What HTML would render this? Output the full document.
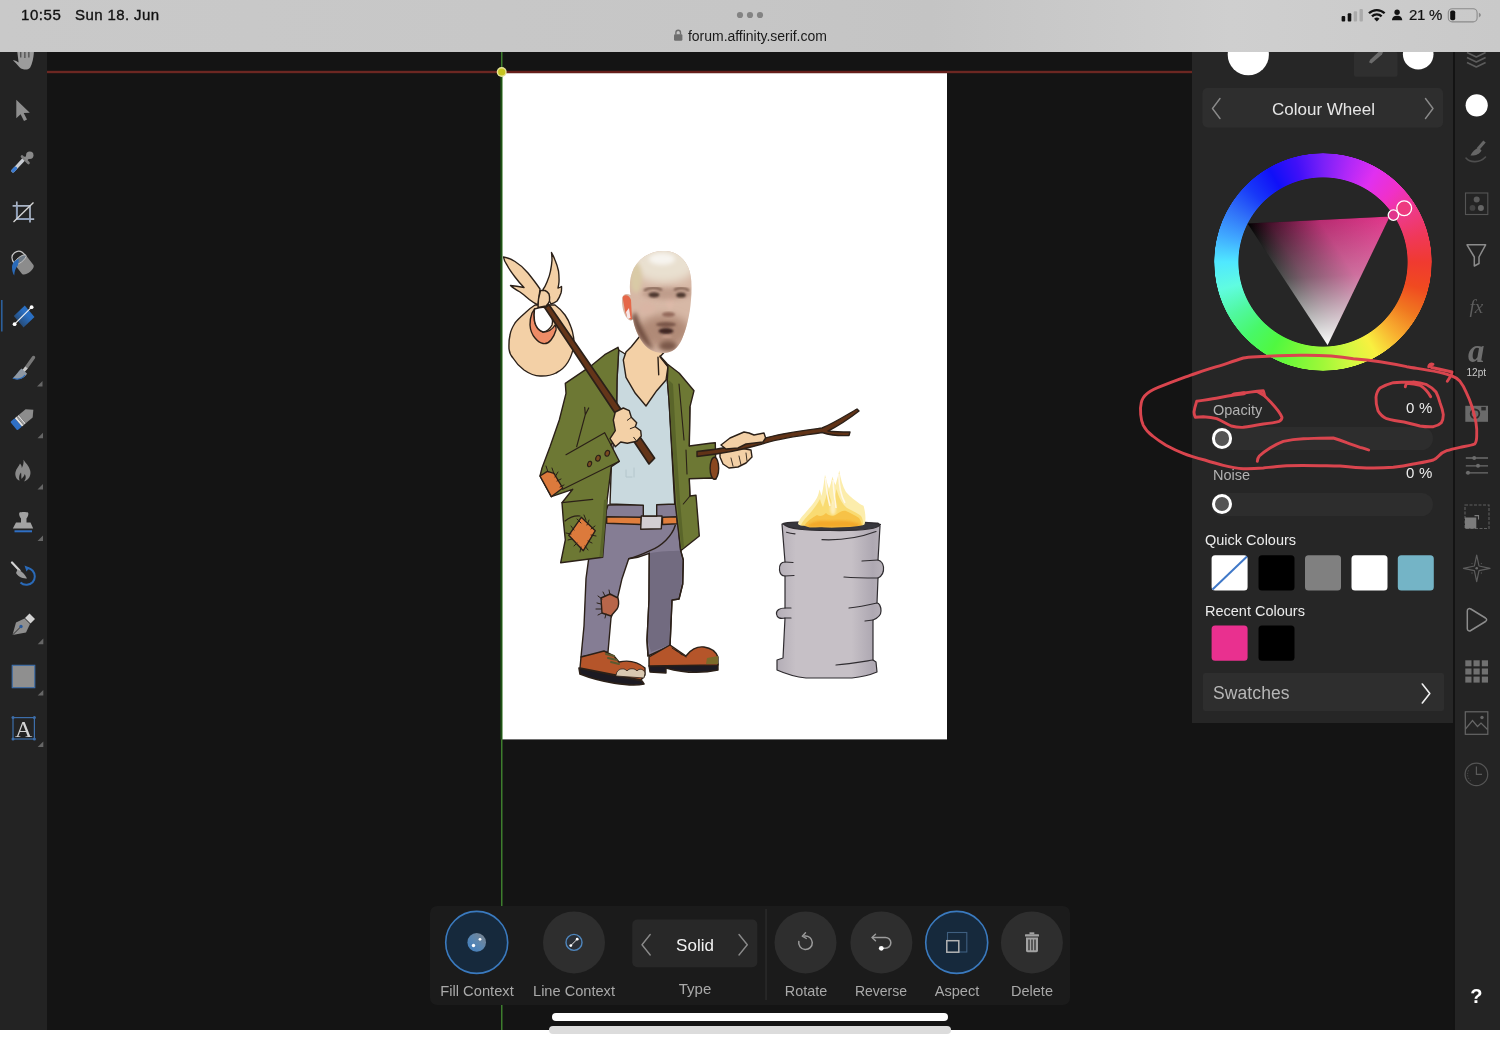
<!DOCTYPE html>
<html><head><meta charset="utf-8">
<style>
html,body{margin:0;padding:0;}
body{width:1500px;height:1043px;position:relative;overflow:hidden;background:#fff;font-family:"Liberation Sans",sans-serif;}
.abs{position:absolute;}
#topbar{left:0;top:0;width:1500px;height:52.400px;background:linear-gradient(90deg,#c9c9c9 0%,#c6c6c6 50%,#c4c4c4 62%,#cfcfcf 82%,#c9c9c9 100%);}
#canvas{left:0;top:52px;width:1500px;height:978px;background:#141414;}
#ltool{left:0;top:52px;width:47px;height:978px;background:#232323;}
#rtool{left:1455px;top:52px;width:45px;height:978px;background:#242424;}
#rdiv{left:1453px;top:52px;width:2px;height:978px;background:#131313;}
#panel{left:1192.400px;top:52px;width:260.600px;height:671.300px;background:#262626;}
.t{position:absolute;white-space:nowrap;line-height:1;will-change:transform;}
</style></head><body>
<div id="canvas" class="abs"></div>
<!--ART--><svg class="abs" style="left:0;top:0" width="1500" height="1043" viewBox="0 0 1500 1043">
<defs>
 <filter id="b1" x="-20%" y="-20%" width="140%" height="140%"><feGaussianBlur stdDeviation="1"/></filter>
 <filter id="b2" x="-30%" y="-30%" width="160%" height="160%"><feGaussianBlur stdDeviation="2.2"/></filter>
 <filter id="b4" x="-40%" y="-40%" width="180%" height="180%"><feGaussianBlur stdDeviation="4"/></filter>
 <filter id="b05" x="-20%" y="-20%" width="140%" height="140%"><feGaussianBlur stdDeviation="0.5"/></filter>
 <clipPath id="headclip"><path d="M666 251c-14-1-26 6-32 17c-4 8-5 18-3.5 27c-4-2-8-1-8.500 4c-.5 7 2 18 7 21c2 1 3.500 0 4-1c1 8 5 17 10 24c6 8 14 10 21 10c8 0 14-5 18-14c4-9 8-24 9-39c1-13 1-25-3-33c-4-9-12-15.500-22-16z"/></clipPath>
 <radialGradient id="skull" cx="0.5" cy="0.2" r="0.6"><stop offset="0" stop-color="#efe6da"/><stop offset="0.55" stop-color="#e0cdb8"/><stop offset="1" stop-color="#cfae98"/></radialGradient>
 <linearGradient id="barrelg" x1="0" x2="1" y1="0" y2="0"><stop offset="0" stop-color="#b3adb6"/><stop offset="0.18" stop-color="#c6c0c6"/><stop offset="0.7" stop-color="#c6c0c6"/><stop offset="0.9" stop-color="#aea8b2"/><stop offset="1" stop-color="#b8b2ba"/></linearGradient>
</defs>
<!-- page -->
<rect x="502" y="72.300" width="445" height="667.100" fill="#fff"/>
<rect x="47" y="71.100" width="1150" height="1.800" fill="#82302a"/>
<rect x="47" y="70.300" width="1150" height="3.400" fill="#5a1d1a" opacity="0.350"/>
<rect x="502" y="71.100" width="445" height="1.800" fill="#651f1a"/>
<rect x="501" y="52" width="1.500" height="978" fill="#3d7d2d"/>
<rect x="500.400" y="73" width="1.700" height="666.400" fill="#1f5216"/>
<circle cx="501.700" cy="72" r="5" fill="#e6e49a"/><circle cx="501.700" cy="72" r="3.600" fill="#c6c422"/>
<g stroke="#2b2018" stroke-width="1.400" stroke-linejoin="round" stroke-linecap="round">
<!-- bindle ribbons -->
<path d="M540 289C536 283 532 278 528 273C524 268 519 264 515 261.500C511 259 507 257.500 503.500 257C504 260 505 262.500 507 265C509 269 512 273 515 277C518 281 521 284.500 524 287.500C519 286.500 514.500 285.800 510.500 285.500C513 288 516.500 290 520 292C523.500 294.500 527 297.500 530 300C532.500 302 535 303.500 538 305z" fill="#f3d0a6"/>
<path d="M543 289.500C545 287 546 284.500 547 282C548.500 278.500 549.800 275 550.500 271C551.300 267 551.800 263.500 552 260C552 257.500 551.800 255 551.500 252.500C553 255 554 257.500 555 260C556.500 263.500 557.700 267 558.500 271C559 275 559.200 278.500 559 282C558.800 284 558.500 286 558 288C559.200 287.800 560.300 287.300 561.500 286.500C561.700 289 561.500 291 561 293C560 296 558.800 298.500 557 301C555 302.500 553 303.500 551 304z" fill="#f3d0a6"/>
<!-- sack -->
<path d="M535 305C531 307.500 528 310 525 313C521 316.500 517.500 319.500 515 323C512.500 327 510.500 331 510 335C509 339 508.800 344 509 349C509.500 353 511 356 513 358C516 363 520 367 524 370C529 373.500 534.500 376 540 376C546 376.200 551.500 375.500 556 373C561 370.500 565 367 568 362C571 357 573 351 573.800 345C574 342 574 339.500 573.500 337C573 333.500 572.200 330 571 327C569.500 322.500 567.500 318.500 565 315C562 311 558.500 307.500 555 305z" fill="#f3d0a6"/>
<path d="M532 313C530.500 317 530 321 530 325C530.300 330 532 334.500 535 338C537.500 341 540 343 543 343.500C546 344 549 342.500 551 340C553.500 337 555 333.500 556 330C556.500 328 556 326.500 555 325C553 328.500 548.500 332 543 332C538 330 535.500 326 534.500 321C534 317 534 313 534.500 309z" fill="#ee8c66"/>
<path d="M534.500 309C534 313 534 317 534.500 321C535.500 326 538.500 330.500 543 332C547 331.500 550 329 552 325C553 321.500 552.500 316 550 309C546 307 540 307 534.500 309z" fill="#fff"/>
<path d="M540.500 290.500L545 290.500C546.800 291.300 548 292.500 549 294C549.800 296.500 549.800 299 549.500 301C548.800 303 547.500 304.800 546 306L538 307.500L538.500 299z" fill="#f3d0a6"/>
</g>
<g stroke="#2b2018" stroke-width="1.400" stroke-linejoin="round" stroke-linecap="round">
<!-- pants -->
<path d="M608 505L676 504L680.700 550.700L683.300 560L682.700 584L679 599L672 600L670 646L648 656L647 640L649 600L649.300 553.300C643 556 636 558 628.700 558.700L622 578.700L618 596L611 618L608 652L581 657L584 626L586 578.700L588.700 558.700L592 552z" fill="#857d94"/>
<path d="M649.300 553.300L649.300 600L647.500 640L651 652L669 645L671 600L678 598L681.500 584L682 561L680.700 550.700C672 551 660 551 649.300 553.300z" fill="#726b80" stroke="none"/>
<path d="M675.300 525.300C672 536 662 546 650 550.700C643 554 636 557 628.700 558.700" fill="none"/>
<path d="M680.700 550.700L683.300 560L682.700 584L679 599L672 600L670 646M649.300 553.300L649 600L647 640L648 656" fill="none"/>
<!-- belt -->
<path d="M606.700 516.700L641.300 517.300L641.300 524.500L606.700 523.300z" fill="#e07e3c"/>
<path d="M662.500 517.300L676.700 516.700L677.300 523.800L662.500 524.500z" fill="#e07e3c"/>
<path d="M641.300 516L662 516L661.300 528.700L640.700 529.300z" fill="#d2ced2"/>
<!-- knee patch -->
<path d="M601 598L610 594L618 598C619 602 619 606 617 609L611 616L602 613z" fill="#b8664a"/>
<path d="M598 596l4 3M603 592l2 4M609 590l1 5M597 603l4 1M596 609l5 0M598 615l4-2M605 618l1-4" fill="none" stroke-width="1"/>
<!-- shoes -->
<path d="M579 668L642 681L644 684C630 687 600 682 580 674z" fill="#1c1a22" stroke-width="1.600"/>
<path d="M581 657L604 651L614 656L619 662C628 660 638 662 645 668L645 675L641 680L580 668z" fill="#b5552a"/>
<path d="M617 672C619 668 625 668 627 671C629 668 635 668 637 671C639 668 644 669 645 673L644 678L616 676z" fill="#d9c8b0" stroke-width="0.800"/>
<path d="M606 654l8 2M608 658l9 2M611 662l8 2" fill="none" stroke="#5a5a30" stroke-width="2"/>
<path d="M649 666L718 664L718 670C700 674 680 672 666 668L666 673L650 672z" fill="#1c1a22" stroke-width="1.400"/>
<path d="M649 657L670 645L686 656C690 650 697 646 704 647C711 648 716 652 718 657L718 665L649 666z" fill="#b5552a"/>
<path d="M707 658L718 656L718 664L706 664z" fill="#7a6a2a" stroke="none"/>
<path d="M672 648l6 4M676 650l6 5M680 653l6 4" fill="none" stroke-width="1"/>
<!-- shirt -->
<path d="M618.700 350L667.300 380L669 400L674.700 504L656.700 504.700L656.700 516L643.300 516L643.300 505.300L610 504L611.300 466.700L616.700 404L617 380z" fill="#c9d9de"/>
<path d="M626 470l0 7l6 0M634 468l0 9" fill="none" stroke="#b4c6cc" stroke-width="1"/>
<!-- neck / chest skin -->
<path d="M640 336L631.300 346.700L626 352L623.300 360L626 377.300L635.300 393.300L646 406L656.700 390.700L666 380L668 366.700L660 356.700L670 346z" fill="#f3d0a6"/>
<path d="M658 357.300L658.700 374.700" fill="none"/>
<!-- right jacket panel -->
<path d="M660 356L667.300 364L679.300 373.300L694 390.700L690 406.700L689.300 446L710 443.300L715.300 442.700L716 479L711.300 478L689.300 478.700L690 496L696 495.300L699.300 536L680.700 550.700L675.300 504L669 400L667.300 380L668 366.700z" fill="#6d7834"/>
<path d="M668.700 380L672 440L677 504L681.500 549L684 547L680 500L676 440L673 384z" fill="#5a652a" stroke="none"/>
<path d="M690 406.700L689.300 446M689.300 478.700L690 496L683.300 504M679 384L684 440M686 450L687 474" fill="none" stroke-width="1.100"/>
<ellipse cx="714.400" cy="468.300" rx="4.300" ry="11" fill="#8a4820"/>
<!-- left jacket -->
<path d="M618 347.300L604.700 354.700L590 366.700L565.300 383.300L566 393.300L559.300 420L550 446.700L542 468L540 476L551.300 496.700L572.700 489.300L562 502.700L563.300 520L565.300 540L560.700 562.700L602.700 557.300L607.300 498.700L611.300 466.700L619.300 461.300L611 445L618 436L622 420L616.700 404L617 380L618.700 350z" fill="#6d7834"/>
<path d="M604 500L602 530L599.500 557L602.700 557.300L607.300 498.700z" fill="#5a652a" stroke="none"/>
<path d="M562.700 489.300L619.300 461.300M611 445L604.700 432.700M604.700 432.700L566 454.700M584.700 407.300L585.300 414.700L576.700 446.700M588.700 408L585.300 414.700M562 502.700L592.700 499.300M565 521C570 517 576 515.500 580 516" fill="none" stroke-width="1.200"/>
<ellipse cx="589.600" cy="464" rx="1.900" ry="2.800" transform="rotate(20 589.600 464)" fill="#7a4a20" stroke-width="1.100"/><ellipse cx="598" cy="458.200" rx="2.200" ry="3" transform="rotate(20 598 458.200)" fill="#7a4a20" stroke-width="1.100"/><ellipse cx="607.300" cy="453.300" rx="2.200" ry="3" transform="rotate(20 607.300 453.300)" fill="#7a4a20" stroke-width="1.100"/>
<!-- elbow patch -->
<path d="M540 476L547.300 471.300L554 473.300L562.700 488L551.300 496.700z" fill="#dc7a3c"/>
<path d="M546 466l2 6M552 468l2 6M558 472l-3 5M561 479l-4 2M564 485l-4 2" fill="none" stroke-width="1"/>
<!-- pocket patch -->
<path d="M581.300 517.300L595.300 530.700L583.300 550.700L568.700 535.300z" fill="#dc7a3c"/>
<path d="M577 519l4 4M584 515l2 5M589 520l-2 5M595 526l-4 3M596 536l-5-1M592 543l-4-2M588 550l-3-4M580 552l1-5M574 546l3-3M568 540l4-1M566 533l5 1M571 526l3 4" fill="none" stroke-width="1"/>
<!-- stick 1 -->
<path d="M544.800 307.800L549 304.800L654.600 458.200L649 464z" fill="#643519" stroke-width="1.700"/>
<!-- left fist -->
<path d="M615.300 412L623.300 408L629.300 410.700L631.300 417.300L636.700 422.700L635.300 426.700L640.700 430.700L641.300 436L636.700 441.300L627.300 443.300L620.700 442L615.300 446.700L610 438.700L615.300 430.700L613.300 420z" fill="#f3d0a6"/>
<path d="M631.300 417.300l-4 3M635.300 426.700l-5 2M636.700 441.300l-3-4" fill="none" stroke-width="1"/>
<!-- right hand lower fingers -->
<path d="M720 452L720 457L723 464L729 468L738 467L746 463L752 457L751 450L740 448z" fill="#f3d0a6"/>
<path d="M731 458l2 8M739 456l2 9M746 453l1 8" fill="none" stroke-width="0.900"/>
<!-- stick 2 -->
<path d="M697 451.500C720 449 740 446 758 440C776 434 800 431 822 428C836 422 848 414 857 409L859 411C850 418 838 426 828 431C836 432 844 432 850 432L849 435.500C840 436 830 435 822 432.500C800 436 780 438 762 444C742 450 720 454 697 456.500z" fill="#613317" stroke-width="1.400"/>
<!-- right hand top -->
<path d="M721 445L730 438L744 432L749 433L754 435L764 433L765.600 438L763 442L746 444L738 448L726 449z" fill="#f3d0a6"/>
</g>
<!-- head (photo-like) -->
<g clip-path="url(#headclip)">
 <rect x="615" y="245" width="85" height="115" fill="#d7b8a6"/>
 <ellipse cx="664" cy="264" rx="32" ry="19" fill="#e9e0d0" filter="url(#b4)"/>
 <ellipse cx="636" cy="278" rx="6" ry="15" fill="#d9caa6" filter="url(#b2)"/>
 <ellipse cx="662" cy="259" rx="13" ry="6" fill="#f7f4ef" filter="url(#b2)"/>
 <ellipse cx="664" cy="331" rx="26" ry="16" fill="#b08a77" filter="url(#b4)"/>
 <path d="M632 316C634 330 642 344 654 350C648 338 640 326 636 312z" fill="#6e4c3e" filter="url(#b2)"/>
 <ellipse cx="647" cy="308" rx="8" ry="6" fill="#d9b5a4" filter="url(#b2)"/>
 <ellipse cx="670" cy="302" rx="4" ry="7" fill="#dcb9a8" filter="url(#b1)"/>
 <ellipse cx="667" cy="293.500" rx="25" ry="6" fill="#b08c7c" filter="url(#b2)" opacity="0.600"/>
 <path d="M644 290.500C649 287 657 287 662 290M674 290C678 287.500 685 287.500 689 290.500" stroke="#7a5a4c" stroke-width="2.200" fill="none" filter="url(#b1)"/>
 <ellipse cx="654" cy="294.800" rx="5.500" ry="2.600" fill="#4e382f" filter="url(#b1)"/>
 <ellipse cx="681" cy="295" rx="4.800" ry="2.600" fill="#4e382f" filter="url(#b1)"/>
 <ellipse cx="668.500" cy="314.500" rx="6.500" ry="2.400" fill="#946b5b" filter="url(#b1)"/>
 <ellipse cx="666" cy="324.500" rx="10" ry="2.600" fill="#7a5648" filter="url(#b1)"/>
 <ellipse cx="666" cy="331" rx="7.500" ry="3" fill="#402624" filter="url(#b1)"/>
 <ellipse cx="667" cy="336.500" rx="5" ry="1.600" fill="#c29a88" filter="url(#b1)"/>
 <ellipse cx="668" cy="346" rx="9" ry="5" fill="#7a5848" filter="url(#b2)"/>
 <path d="M622.500 297c3-3.500 7-1.500 8.500 3l1 19c-3.500 1.500-6-3-7-8z" fill="#e5674a" filter="url(#b05)"/>
 <path d="M626 312l3-4l1.500 10l-3 1z" fill="#f6e6e6" filter="url(#b05)"/>
</g>

<g stroke="#2f2c30" stroke-width="1.200" stroke-linejoin="round" stroke-linecap="round">
<path d="M782 524L785 562C781 562 779 565 779.500 570C780 575 782 576 785 576L785 608C780 608 776 610 776.500 614C777 618 780 619 785 618L783 658L777 660L777 670C786 674 796 677 806 678L852 678C862 677 870 675 877 672L876 662L873 660L873 620C878 618 881 615 881 611C881 606 879 603 877 603L878 578C882 576 884 572 883.500 567C883 563 881 561 878 560L880 526L878 523z" fill="url(#barrelg)"/>
<path d="M783 523.500C790 521 872 520.500 880.500 524.500C878 529 858 531 830 530.500C806 530.500 788 529.500 783 523.500z" fill="#37373d"/>
<path d="M822 539.700C840 540.500 860 537.500 876 531.500M786.500 532.300C789 533.200 792 533.700 795 533.800M785 562L793 562.500M785 576L794 575.500M785 608L791 608M785 618L791 618M878 560L862 561M878 578C868 578 856 578 844 577M877 603C868 605 858 607 849 608M873 620L865 621M873 660C860 662 848 664 836 665" fill="none"/>
</g>
<!-- flame -->
<g filter="url(#b05)">
<path d="M798 524C798.500 520 802 516.500 806 512C810 507.500 814 503 816.800 498C818.500 495 819 492 819.400 489.500C820.500 492 821 494 821.500 496C823 490 824 482 825 474.700C826.500 480 827.500 485 829 489C830.500 485 831.500 481 832.400 476.500C833.500 480 834.500 483 835.500 485C837 480 838.200 475 839.300 470.400C840.500 478 842.500 486 846 492C850 497 856 501 860 504C862 505 863 505.500 863.600 506C865 511 865.800 516 865.300 521L864 527L800 527z" fill="#fcedac"/>
<path d="M801 525C803 520 808 516 812 511C815 507 818 503 820 499C821 503 822 505 823 507C825 501 826.500 495 828 490C829.500 496 831 501 833 505C834.500 500 835.500 494 836.500 489C838.500 497 842 504 847 508C852 511 858 513 861 516C863 519 863.500 523 863 527L802 527z" fill="#f9db72"/>
<path d="M804 526C807 521 812 518 817 515C820 517 823 516 826 513C829 516 833 517 837 514C840 512 843 510 846 511C850 513 855 515 859 518C861 521 862 524 862 527L805 528z" fill="#f7c246"/>
<path d="M825.500 478C826 488 828 498 830 506M838.800 474C839 486 841 496 845 503M833 480C833.500 490 835 500 836 508" stroke="#fffaf0" stroke-width="1.600" fill="none" opacity="0.900"/>
<ellipse cx="833" cy="508" rx="3" ry="7" fill="#fff6d8" opacity="0.700" filter="url(#b1)"/><path d="M808 525C812 522 820 520 828 521C838 520 850 520 860 524L858 527L808 527z" fill="#f3a92c" filter="url(#b1)"/>
</g>
<path d="M797 523.500C800 526.500 804 525 808 527C812 528.500 818 526.500 824 527.500C832 528.500 842 527.500 850 527C856 526.500 862 526 866 524L868 526C860 529 840 530 824 529.500C812 529.500 802 528.500 796 526z" fill="#37373d"/>

</svg>
<!--ART-END-->
<div id="ltool" class="abs"></div>
<div id="panel" class="abs"></div>
<div id="rdiv" class="abs"></div>
<div id="rtool" class="abs"></div>
<div id="topbar" class="abs"></div>
<!--STATUS-->

<div class="t" style="left:20.500px;top:7.100px;font-size:15px;color:#111;letter-spacing:0.55px;-webkit-text-stroke:0.35px #111;">10:55</div>
<div class="t" style="left:75px;top:7.100px;font-size:15px;color:#111;letter-spacing:0.4px;-webkit-text-stroke:0.35px #111;">Sun 18. Jun</div>
<svg class="abs" style="left:730px;top:8px" width="40" height="14"><circle cx="10" cy="7" r="3.1" fill="#838383"/><circle cx="20" cy="7" r="3.1" fill="#838383"/><circle cx="30" cy="7" r="3.1" fill="#838383"/></svg>
<svg class="abs" style="left:672px;top:28px" width="14" height="14" viewBox="0 0 14 14"><rect x="2" y="6.2" width="8.4" height="6.6" rx="1.2" fill="#6e6e6e"/><path d="M3.9 6.5V4.6a2.3 2.3 0 0 1 4.6 0V6.5" fill="none" stroke="#6e6e6e" stroke-width="1.4"/></svg>
<div class="t" style="left:688px;top:28.5px;font-size:14px;color:#1a1a1a;letter-spacing:-0.03px;">forum.affinity.serif.com</div>
<svg class="abs" style="left:1336px;top:4px" width="150" height="24" viewBox="1336 4 150 24">
 <rect x="1341.6" y="16" width="3.6" height="5.6" rx="1" fill="#111"/>
 <rect x="1347.7" y="13.2" width="3.6" height="8.4" rx="1" fill="#111"/>
 <rect x="1353.7" y="11.2" width="3.4" height="10.4" rx="1" fill="#aaa"/>
 <rect x="1359.5" y="9" width="3.4" height="12.6" rx="1" fill="#aaa"/>
 <g fill="none" stroke="#111" stroke-width="2.3" stroke-linecap="butt">
  <path d="M1369.0 13.3a11 11 0 0 1 15.6 0"/>
  <path d="M1372.0 16.4a6.7 6.7 0 0 1 9.6 0"/>
 </g>
 <path d="M1376.8 21.6l-2.7-2.8a3.8 3.8 0 0 1 5.4 0z" fill="#111"/>
 <circle cx="1397.1" cy="12.3" r="2.7" fill="#111"/>
 <path d="M1392 20.3c0-3.2 2.3-4.6 5.1-4.6s5.1 1.4 5.1 4.6z" fill="#111"/>
 <rect x="1448.3" y="8.7" width="28.8" height="13.2" rx="4" fill="none" stroke="#8a8a8a" stroke-width="1.1"/>
 <rect x="1450.2" y="10.4" width="5" height="9.8" rx="1.8" fill="#111"/>
 <path d="M1478.9 12.8c1.2 0.5 1.9 1.3 1.9 2.3s-0.7 1.8-1.9 2.3z" fill="#8a8a8a"/>
</svg>
<div class="t" style="left:1409px;top:6.800px;font-size:15px;color:#111;letter-spacing:-0.3px;-webkit-text-stroke:0.2px #111;">21 %</div>
<!--STATUS-END-->
<!--PANEL--><svg class="abs" style="left:1193px;top:52px" width="260" height="80" viewBox="1193 52 260 80">
 <rect x="1354" y="52" width="43.500" height="24.800" rx="2" fill="#2f2f2f"/>
 <circle cx="1248.300" cy="54.700" r="20.600" fill="#fff"/>
 <circle cx="1418.200" cy="54.200" r="15.300" fill="#fff"/>
 <path d="M1369 62.300L1370.200 59.800L1378.500 52H1383L1382 54.500L1371.500 63.500z" fill="#6c6c6c"/>
 <rect x="1202.500" y="88" width="240.500" height="39.500" rx="5" fill="#2e2e2e"/>
 <path d="M1220 98.500L1212.500 108.500L1220 118.500M1425.500 98.500L1433 108.500L1425.500 118.500" fill="none" stroke="#8a8a8a" stroke-width="1.400" stroke-linecap="round" stroke-linejoin="round"/>
</svg>
<div class="t" style="left:1271.500px;top:101.0px;font-size:17px;color:#e6e6e6;">Colour Wheel</div>
<!-- wheel -->
<div class="abs" style="left:1214.300px;top:153px;width:217.800px;height:217.800px;border-radius:50%;background:conic-gradient(from 90deg,#f03a30 0deg,#f04a20 15deg,#f07820 30deg,#f8b030 45deg,#f8f040 60deg,#d0f840 75deg,#a0f838 90deg,#78f838 105deg,#50f840 120deg,#48f868 135deg,#50f8a0 150deg,#60fce0 165deg,#50e8ff 180deg,#40a8ff 195deg,#3070f8 210deg,#1838f8 225deg,#1010f8 240deg,#4010f8 255deg,#7a20f8 270deg,#b028f8 285deg,#e030f0 300deg,#f030c8 315deg,#ee3a88 330deg,#f03858 345deg,#f03a30 360deg);-webkit-mask:radial-gradient(circle closest-side,transparent 84.200px,#000 85px,#000 108.400px,transparent 109px);mask:radial-gradient(circle closest-side,transparent 84.200px,#000 85px,#000 108.400px,transparent 109px);"></div>
<svg class="abs" style="left:1193px;top:140px" width="260" height="240" viewBox="1193 140 260 240">
 <defs>
  <linearGradient id="th" gradientUnits="userSpaceOnUse" x1="1389.8" y1="216.4" x2="1287.2" y2="283.8"><stop offset="0" stop-color="#e3378c" stop-opacity="1"/><stop offset="0.5" stop-color="#e3378c" stop-opacity="0.8"/><stop offset="0.85" stop-color="#e3378c" stop-opacity="0.3"/><stop offset="1" stop-color="#e3378c" stop-opacity="0"/></linearGradient>
  <linearGradient id="tw" gradientUnits="userSpaceOnUse" x1="1327.6" y1="345.3" x2="1321.2" y2="219.9"><stop offset="0" stop-color="#fff" stop-opacity="1"/><stop offset="0.25" stop-color="#fff" stop-opacity="0.7"/><stop offset="0.55" stop-color="#fff" stop-opacity="0.32"/><stop offset="1" stop-color="#fff" stop-opacity="0"/></linearGradient>
 </defs>
 <path d="M1247.600 223.600L1389.800 216.400L1327.600 345.300z" fill="#000"/>
 <path d="M1247.600 223.600L1389.800 216.400L1327.600 345.300z" fill="url(#th)"/>
 <path d="M1247.600 223.600L1389.800 216.400L1327.600 345.300z" fill="url(#tw)"/>
 <circle cx="1404.200" cy="208.300" r="7.400" fill="#ee3a80" stroke="#fff" stroke-width="1.300"/>
 <circle cx="1393.400" cy="215.100" r="5.200" fill="#e0358c" stroke="#fff" stroke-width="1.300"/>
</svg>
<!-- sliders -->
<div class="t" style="left:1212.500px;top:403.300px;font-size:14.500px;color:#b2b2b2;">Opacity</div>
<div class="t" style="left:1405.500px;top:400.300px;font-size:15px;color:#ececec;letter-spacing:0.2px;">0 %</div>
<div class="abs" style="left:1210.500px;top:427px;width:222.500px;height:23px;border-radius:11.500px;background:#2d2d2d;"></div>
<div class="abs" style="left:1211.800px;top:428.300px;width:14.400px;height:14.400px;border-radius:50%;border:3px solid #fff;background:#555;"></div>
<div class="t" style="left:1212.500px;top:468.300px;font-size:14.500px;color:#b2b2b2;">Noise</div>
<div class="t" style="left:1405.500px;top:465.200px;font-size:15px;color:#ececec;letter-spacing:0.2px;">0 %</div>
<div class="abs" style="left:1210.500px;top:492.500px;width:222.500px;height:23px;border-radius:11.500px;background:#2d2d2d;"></div>
<div class="abs" style="left:1211.800px;top:493.600px;width:14.400px;height:14.400px;border-radius:50%;border:3px solid #fff;background:#555;"></div>
<div class="t" style="left:1205px;top:533.0px;font-size:14.500px;color:#ececec;">Quick Colours</div>
<svg class="abs" style="left:1200px;top:550px" width="250" height="120" viewBox="1200 550 250 120">
 <rect x="1211.600" y="555.300" width="36" height="35.200" rx="3.500" fill="#fff"/>
 <path d="M1212.500 589.500L1247 556.500" stroke="#3f78c8" stroke-width="2" fill="none"/>
 <rect x="1258.500" y="555.300" width="36" height="35.200" rx="3.500" fill="#000"/>
 <rect x="1305" y="555.300" width="36" height="35.200" rx="3.500" fill="#808080"/>
 <rect x="1351.500" y="555.300" width="36" height="35.200" rx="3.500" fill="#fff"/>
 <rect x="1397.800" y="555.300" width="36" height="35.200" rx="3.500" fill="#74b4c6"/>
 <rect x="1211.600" y="625.500" width="36" height="35.200" rx="3.500" fill="#e9308f"/>
 <rect x="1258.500" y="625.500" width="36" height="35.200" rx="3.500" fill="#000"/>
</svg>
<div class="t" style="left:1205px;top:603.500px;font-size:14.500px;color:#ececec;">Recent Colours</div>
<div class="abs" style="left:1202.500px;top:673.200px;width:241px;height:37.500px;background:#2e2e2e;border-radius:2px;"></div>
<div class="t" style="left:1212.500px;top:685.2px;font-size:17.500px;color:#b6b6b6;letter-spacing:0.1px;">Swatches</div>
<svg class="abs" style="left:1415px;top:680px" width="22" height="28" viewBox="1415 680 22 28"><path d="M1422.300 684L1429.800 693.500L1422.300 703" fill="none" stroke="#f0f0f0" stroke-width="1.600" stroke-linecap="round" stroke-linejoin="round"/></svg>
<!--PANEL-END-->
<!--LEFTICONS--><svg class="abs" style="left:0;top:52px;will-change:transform" width="47" height="978" viewBox="0 52 47 978">
<defs>
 <linearGradient id="gq" x1="0" y1="1" x2="1" y2="0"><stop offset="0" stop-color="#2a6fc2" stop-opacity="0.250"/><stop offset="0.6" stop-color="#2a6fc2"/><stop offset="1" stop-color="#2a6fc2"/></linearGradient>
</defs>
<!-- hand (clipped) -->
<path d="M12.900 60.200C15 60 17 61 18.600 62.600L17.300 52L33.900 52C33.600 58 32.200 64 30.200 67.400C28.700 69.400 26.200 69.800 24.200 69.500C21.600 69.200 20 68 18.800 66.500C17 64.300 15 62 12.900 60.200z" fill="#9c9c9c"/>
<path d="M20.800 52v5.500M24.900 52v6M28.900 52v5.500" stroke="#2e2e2e" stroke-width="0.900"/>
<!-- arrow -->
<path d="M16.300 99.800L16.300 118.200L20.600 114.300L24 121L27 119.600L23.700 113L29.800 112.800z" fill="#8e8e8e"/>
<!-- eyedropper -->
<path d="M13 170.800L24.500 158.500" stroke="#c8ccd2" stroke-width="3.400" stroke-linecap="round"/>
<path d="M13 170.800L15.500 168.200" stroke="#3a7ad0" stroke-width="3.400" stroke-linecap="round"/>
<path d="M22 156.500L28.500 163" stroke="#7e7e7e" stroke-width="2.600" stroke-linecap="round"/>
<path d="M25.500 159.500L29.500 155.200" stroke="#8a8a8a" stroke-width="4" stroke-linecap="butt"/>
<circle cx="29.800" cy="155.200" r="3.700" fill="#8a8a8a"/>
<!-- crop -->
<g stroke="#a9b4c6" stroke-width="1.700" fill="none"><path d="M16.800 201.500V219.200H34.200M12.600 205.800H30V222.500"/><path d="M16.800 205.800V219.200H30" stroke="#8fa0bb"/></g>
<path d="M13.500 222L33.500 202.500" stroke="#d8d8d8" stroke-width="1.300"/>
<!-- bucket -->
<g transform="rotate(-38 24 265)">
 <path d="M17 258.500h14.500v12c0 2.200-3.200 3.600-7.200 3.600s-7.300-1.400-7.300-3.600z" fill="#8c8c8c"/>
 <ellipse cx="24.250" cy="258.500" rx="7.250" ry="2.600" fill="#6e7a86" stroke="#c2c2c2" stroke-width="0.900"/>
 <path d="M17.500 258C17 252.500 20 249.500 24 249.500C28.500 249.500 31 252.500 31 258" fill="none" stroke="#c6c6c6" stroke-width="1.200"/>
</g>
<path d="M18.500 259C14.500 260.500 12 263.500 12 267.500C12 271 13 273.500 14.200 275.500C14.500 271.500 15.500 268 17.800 265.500C18.500 263.500 19 261 18.500 259z" fill="#2a6ab8"/>
<!-- gradient tool (selected) -->
<rect x="1" y="300" width="1.600" height="31.500" fill="#2c5f9a"/>
<path d="M24.800 305.500L34.500 317L23.500 327.500L13.800 316z" fill="url(#gq)"/>
<path d="M14.600 324.200L31.600 307.200" stroke="#f4f4f4" stroke-width="1.200"/>
<circle cx="14.600" cy="324.200" r="1.900" fill="#fff"/><circle cx="31.600" cy="307.200" r="1.900" fill="#fff"/>
<!-- brush -->
<path d="M33.500 357.500L26 368" stroke="#777" stroke-width="3.400" stroke-linecap="round"/>
<path d="M26.500 367.500L23 371.500" stroke="#c9c9c9" stroke-width="3.200"/>
<path d="M21.500 368.500C18 371 16.500 375 12.500 378.500C17.500 380 24.500 379 27 373.500z" fill="#8e98a4"/>
<path d="M13 378.300C17 379.600 22 379 25 375" fill="none" stroke="#2a6ab8" stroke-width="1.200"/>
<path d="M42.500 381V386.500H37z" fill="#666"/>
<!-- eraser -->
<g transform="rotate(-40 23 418.500)">
 <rect x="11" y="413" width="6" height="11" rx="1" fill="#2f6fc4"/>
 <rect x="17" y="413" width="2" height="11" fill="#e6e6e6"/><rect x="19" y="413" width="1.500" height="11" fill="#9a9a9a"/><rect x="20.500" y="413" width="1.500" height="11" fill="#d8d8d8"/>
 <path d="M22 413H31L36.500 418.500L31 424H22z" fill="#8c8c8c"/>
</g>
<path d="M43 432.800V438.300H37.500z" fill="#666"/>
<!-- flame -->
<path d="M23.500 459.800C25.500 463 29 466 30.200 470.500C31.300 475 29 480 24 481.500C26 479.500 26.300 476.500 24.800 474C24 476.500 22.500 477.500 21.500 479C21.200 476.500 21.500 474.500 21 472.500C19.500 474.500 18.500 477 19.500 480.800C16 479 14.800 475.500 15.500 472C16.300 468.500 19 466.500 20 463.500C21.500 465 21.800 466.500 21.800 468C23.300 465.500 23.800 462.500 23.500 459.800z" fill="#8a8a8a"/>
<path d="M43 484V489.500H37.500z" fill="#666"/>
<!-- stamp -->
<path d="M19.500 512.500C21 511.800 26.500 511.800 28 512.500C29 514 28 516.500 26.500 518.500V522.500H30.500L33.200 528.500H12.800L16 522.500H21V518.500C19.500 516.500 18.500 514 19.500 512.500z" fill="#a2a2a2"/>
<rect x="14.500" y="530.300" width="17.500" height="2" fill="#2f6fc4"/>
<path d="M43 535.500V541H37.500z" fill="#666"/>
<!-- history brush -->
<path d="M12 562.500L19.500 570.500" stroke="#d2d2d2" stroke-width="2.200" stroke-linecap="round"/>
<path d="M17.500 569.500C20 570 24.500 573.500 27 578.500C23.500 578.500 18.500 577.500 16 573z" fill="#9a9a9a"/>
<path d="M27.500 568C31.500 568.500 34.800 572 34.800 576.500C34.800 581 31.500 584.500 27 584.800C24.500 585 22 584 20.500 582.500" fill="none" stroke="#2a6ab8" stroke-width="2"/>
<path d="M24.500 565.500L29.500 567.500L26.500 571.500z" fill="#2a6ab8"/>
<!-- pen -->
<path d="M12.500 635L16 622.500L24.500 618.500L30 624L26 632.500z" fill="#8e8e8e"/>
<path d="M12.500 635L20.500 627" stroke="#232323" stroke-width="0.900"/><circle cx="21" cy="626.500" r="1.700" fill="#2a5a9a"/>
<path d="M25 618L30.500 623.500L35 619L29.500 613.500z" fill="#d2d2d2"/>
<path d="M43.300 638.600V644.200H37.700z" fill="#666"/>
<!-- square -->
<rect x="12.200" y="665.300" width="22.600" height="22.400" fill="#8f8f8f" stroke="#3d6eaa" stroke-width="1.100"/>
<path d="M43.300 690V695.500H37.700z" fill="#666"/>
<!-- text -->
<rect x="13" y="717.600" width="21.400" height="21.400" fill="none" stroke="#3d6eaa" stroke-width="1.200"/>
<g fill="#3d6eaa"><circle cx="13" cy="717.600" r="1.500"/><circle cx="34.400" cy="717.600" r="1.500"/><circle cx="13" cy="739" r="1.500"/><circle cx="34.400" cy="739" r="1.500"/></g>
<text x="23.700" y="737" font-family="Liberation Serif, serif" font-size="24" fill="#d4d4d4" text-anchor="middle">A</text>
<path d="M43.300 741.500V747H37.700z" fill="#666"/>
</svg>
<!--LEFTICONS-END-->
<!--RIGHTICONS--><svg class="abs" style="left:1455px;top:52px;will-change:transform" width="45" height="978" viewBox="1455 52 45 978">
<!-- layers (clipped) -->
<g fill="none" stroke="#5c5c5c" stroke-width="1.600" stroke-linejoin="round"><path d="M1467 52.500L1476.300 57L1485.600 52.500M1467 57.500L1476.300 62L1485.600 57.500M1467 62.500L1476.300 67L1485.600 62.500"/></g>
<circle cx="1476.700" cy="105.300" r="11.100" fill="#fff"/>
<!-- brush studio -->
<path d="M1484.500 141.500L1478 149" stroke="#666" stroke-width="3.200" stroke-linecap="butt"/>
<path d="M1478.500 147.500C1475 149 1472 152 1470.500 155.500C1474.500 156 1479.500 154.500 1481.500 150.500z" fill="#666"/>
<path d="M1466 158C1470 163 1480 163 1485.500 157" fill="none" stroke="#4e4e4e" stroke-width="1.600" stroke-linecap="round"/>
<!-- dots square -->
<rect x="1465.500" y="193" width="22.300" height="21.500" fill="none" stroke="#555" stroke-width="1.100"/>
<circle cx="1476.700" cy="199.600" r="3" fill="#5a5a5a"/><circle cx="1472.500" cy="207.900" r="2.900" fill="#434343"/><circle cx="1480.900" cy="207.900" r="3" fill="#666"/>
<!-- funnel -->
<path d="M1467 244.800H1485.600L1479 257V263.500L1474.300 266V257z" fill="none" stroke="#8c8c8c" stroke-width="1.500" stroke-linejoin="round"/>
<text x="1476.300" y="313" font-family="Liberation Serif, serif" font-style="italic" font-size="19" fill="#5e5e5e" text-anchor="middle">fx</text>
<text x="1476.300" y="361.500" font-family="Liberation Serif, serif" font-style="italic" font-weight="bold" font-size="33" fill="#6e6e6e" text-anchor="middle">a</text>
<text x="1476.300" y="375.800" font-family="Liberation Sans, sans-serif" font-size="10" fill="#cacaca" text-anchor="middle">12pt</text>
<!-- camera -->
<rect x="1465.300" y="405.800" width="22.700" height="16" fill="#6a6a6a"/>
<circle cx="1475" cy="413.800" r="4.300" fill="#6a6a6a" stroke="#2a2a2a" stroke-width="1.800"/>
<rect x="1481.300" y="406.900" width="4.500" height="3.500" fill="#2a2a2a"/>
<!-- sliders -->
<g stroke="#6c6c6c" stroke-width="1.300"><path d="M1465.800 458H1488M1465.800 465.800H1488M1465.800 472.800H1488"/></g>
<g fill="#6c6c6c"><circle cx="1474.200" cy="458" r="2"/><circle cx="1478" cy="465.800" r="2"/><circle cx="1468" cy="472.800" r="2"/></g>
<!-- transform -->
<rect x="1465" y="505" width="24" height="23.500" fill="none" stroke="#5e5e5e" stroke-width="1.100" stroke-dasharray="3 1.500"/>
<rect x="1465" y="517.500" width="11.300" height="11" fill="#7c7c7c"/>
<path d="M1474.500 515.600H1478.500V519.600" fill="none" stroke="#7c7c7c" stroke-width="1.100"/>
<!-- navigator star -->
<path d="M1476.700 555L1479 566L1490 568.300L1479 570.600L1476.700 581.700L1474.400 570.600L1463.400 568.300L1474.400 566z" fill="none" stroke="#5e5e5e" stroke-width="1.200" stroke-linejoin="round"/>
<circle cx="1476.700" cy="568.300" r="1.300" fill="#6a6a6a"/>
<g fill="#555"><circle cx="1472" cy="563.600" r="0.700"/><circle cx="1481.400" cy="563.600" r="0.700"/><circle cx="1472" cy="573" r="0.700"/><circle cx="1481.400" cy="573" r="0.700"/></g>
<!-- play -->
<path d="M1467.300 611V628.500C1467.300 630.500 1469 631.500 1470.800 630.500L1485.500 621.500C1487 620.500 1487 619 1485.500 618L1470.800 609C1469 608 1467.300 609 1467.300 611z" fill="none" stroke="#8c8c8c" stroke-width="1.500"/>
<!-- grid -->
<g fill="#707070">
<rect x="1465.300" y="660.300" width="6.200" height="6"/><rect x="1473.500" y="660.300" width="6.200" height="6"/><rect x="1481.800" y="660.300" width="6.200" height="6"/>
<rect x="1465.300" y="668.500" width="6.200" height="6"/><rect x="1473.500" y="668.500" width="6.200" height="6"/><rect x="1481.800" y="668.500" width="6.200" height="6"/>
<rect x="1465.300" y="676.600" width="6.200" height="6"/><rect x="1473.500" y="676.600" width="6.200" height="6"/><rect x="1481.800" y="676.600" width="6.200" height="6"/>
</g>
<!-- image -->
<rect x="1465.300" y="711.800" width="22.500" height="22.500" fill="none" stroke="#666" stroke-width="1.200"/>
<path d="M1465.500 729L1472.500 720.500L1477.500 726.500L1481 723L1487.500 729.500" fill="none" stroke="#666" stroke-width="1.200"/>
<circle cx="1482" cy="717.500" r="1.700" fill="#666"/>
<!-- clock -->
<circle cx="1476.400" cy="774.400" r="11.300" fill="none" stroke="#555" stroke-width="1.200"/>
<path d="M1476.400 766.500V774.400H1482" fill="none" stroke="#5a5a5a" stroke-width="1.200"/>
<path d="M1468.500 770.500A8.500 8.500 0 0 0 1471.500 781.500" fill="none" stroke="#555" stroke-width="1" stroke-dasharray="1 1.500"/>
<text x="1476.400" y="1003" font-family="Liberation Sans, sans-serif" font-weight="bold" font-size="20" fill="#fff" text-anchor="middle">?</text>
</svg>
<!--RIGHTICONS-END-->
<!--BOTTOM--><div class="abs" style="left:429.500px;top:905.500px;width:640px;height:99.300px;background:#1b1b1b;border-radius:7px;"></div>
<svg class="abs" style="left:429px;top:905px" width="642" height="100" viewBox="429 905 642 100">
 <rect x="765.400" y="909" width="1.300" height="91" fill="#2d2d2d"/>
 <circle cx="476.700" cy="942.400" r="31" fill="#16293c" stroke="#3a7abf" stroke-width="1.600"/>
 <defs><linearGradient id="fcg" x1="0" y1="1" x2="1" y2="0"><stop offset="0" stop-color="#3b7cc0"/><stop offset="0.5" stop-color="#5b86b0"/><stop offset="1" stop-color="#80848a"/></linearGradient></defs>
 <circle cx="476.700" cy="942.400" r="9.300" fill="url(#fcg)"/>
 <circle cx="473.500" cy="945.500" r="1.700" fill="#fff"/><circle cx="480" cy="939.300" r="1.400" fill="#fff"/>
 <circle cx="574" cy="942.400" r="31" fill="#2e2e2e"/>
 <circle cx="574" cy="942.400" r="8" fill="#2a2f36" stroke="#4f86bd" stroke-width="1.400"/>
 <path d="M570.800 945.600L577.200 939.200" stroke="#e8e8e8" stroke-width="1"/>
 <circle cx="570.800" cy="945.600" r="1.400" fill="#fff"/><circle cx="577.200" cy="939.200" r="1.400" fill="#fff"/>
 <rect x="632.300" y="919.500" width="125" height="47.800" rx="5" fill="#282828"/>
 <path d="M650.200 934.500L642 944.700L650.200 955M739 934.500L747.300 944.700L739 955" fill="none" stroke="#8a8a8a" stroke-width="1.400" stroke-linecap="round" stroke-linejoin="round"/>
 <circle cx="805.500" cy="942.400" r="31" fill="#2e2e2e"/>
 <circle cx="881.400" cy="942.400" r="31" fill="#2e2e2e"/>
 <circle cx="956.700" cy="942.400" r="31" fill="#16293c" stroke="#3a7abf" stroke-width="1.600"/>
 <circle cx="1031.900" cy="942.400" r="31" fill="#2e2e2e"/>
 <!-- rotate icon -->
 <path d="M804.500 936A6.800 6.800 0 1 1 798.800 941.500" fill="none" stroke="#9c9c9c" stroke-width="1.500" stroke-linecap="round"/>
 <path d="M805.500 932.800L802.300 936.200L806.300 938.500" fill="none" stroke="#9c9c9c" stroke-width="1.400" stroke-linecap="round" stroke-linejoin="round"/>
 <!-- reverse icon -->
 <path d="M872.500 937.500H885.500A5.300 5.300 0 0 1 885.500 948.200H883.500" fill="none" stroke="#9c9c9c" stroke-width="1.500" stroke-linecap="round"/>
 <path d="M875.500 934.300L872 937.500L875.500 940.700" fill="none" stroke="#9c9c9c" stroke-width="1.400" stroke-linecap="round" stroke-linejoin="round"/>
 <circle cx="881.300" cy="948.300" r="2.400" fill="#fff"/>
 <!-- aspect icon -->
 <rect x="947.500" y="932.500" width="19.300" height="19.500" fill="none" stroke="#3f5f80" stroke-width="1.100"/>
 <rect x="946.800" y="940.700" width="12" height="11.500" fill="#16293c" stroke="#b4b4b4" stroke-width="1.500"/>
 <!-- delete icon -->
 <g fill="#a2a2a2"><rect x="1029.500" y="932.300" width="4.800" height="2"/><rect x="1025" y="934.200" width="14" height="2.200" rx="0.500"/>
 <path d="M1026 937.500H1038V950.500C1038 951.500 1037.300 952.200 1036.300 952.200H1027.700C1026.700 952.200 1026 951.500 1026 950.500z"/></g>
 <g stroke="#2e2e2e" stroke-width="1.300"><path d="M1029 939.500V950.300M1032 939.500V950.300M1035 939.500V950.300"/></g>
</svg>
<div class="t" style="left:395.700px;width:162px;text-align:center;top:984.200px;font-size:14.700px;color:#a9a9a9;">Fill Context</div>
<div class="t" style="left:492.800px;width:162px;text-align:center;top:984.200px;font-size:14.600px;color:#a9a9a9;">Line Context</div>
<div class="t" style="left:613.900px;width:162px;text-align:center;top:981.0px;font-size:15px;color:#a9a9a9;">Type</div>
<div class="t" style="left:613.900px;width:162px;text-align:center;top:936.5px;font-size:17px;color:#f2f2f2;">Solid</div>
<div class="t" style="left:724.500px;width:162px;text-align:center;top:984.200px;font-size:14.400px;color:#a9a9a9;">Rotate</div>
<div class="t" style="left:800.200px;width:162px;text-align:center;top:984.200px;font-size:14px;color:#a9a9a9;">Reverse</div>
<div class="t" style="left:875.700px;width:162px;text-align:center;top:984.200px;font-size:14.600px;color:#a9a9a9;">Aspect</div>
<div class="t" style="left:950.900px;width:162px;text-align:center;top:984.200px;font-size:14.500px;color:#a9a9a9;">Delete</div>
<div class="abs" style="left:552px;top:1013.200px;width:396px;height:8px;border-radius:4px;background:#fff;"></div>
<div class="abs" style="left:549px;top:1026px;width:402px;height:7.500px;border-radius:4px;background:#dcdcdc;"></div>
<!--BOTTOM-END-->
<!--SCRIBBLE--><svg class="abs" style="left:1130px;top:340px" width="370" height="140" viewBox="1130 340 370 140">
<g fill="none" stroke="#d9454e" stroke-width="2.900" stroke-linecap="round" stroke-linejoin="round">
<path d="M1428.700 366.700C1429 364.500 1431 363.500 1433 364.300C1431 365 1430 366 1431.500 367.500C1438 369 1445 370.500 1452 372C1451.500 374 1451 375 1450.700 376C1449.500 378 1448.500 379.500 1447.300 381.300"/>
<path d="M1452 376C1440 371 1420 369 1406.700 366.700C1390 363 1370 360 1353.300 358.700C1340 356.500 1320 355 1300 355.300C1285 355.500 1270 356 1256.700 356.700C1250 357 1246 357.300 1243.300 358C1232 361.500 1224 364.500 1216.700 366.700C1206 370 1198 372.700 1190 375.300C1180 379 1171 382.300 1163.300 385.300C1156 388 1150.500 390.500 1147.300 393.300C1144 396 1142 399 1141.300 402.700C1140.300 406.500 1140.300 411 1140.700 414.700C1141 418.500 1141.800 422 1143.300 425.300C1145.500 429.500 1148.500 433 1152.700 436C1157 439.500 1161.500 442.500 1166 445.300C1171.500 448.300 1177 451 1183.300 453.300C1190 456 1197 458 1204.700 460C1211 462 1217 463.800 1223.300 465.300C1230 467 1236.500 468.300 1243.300 468.700C1250 469 1257 468.500 1263.300 468C1270 467.300 1276.500 466.500 1283.300 466C1295 465 1310 465.500 1340 466C1350 467 1358 467.800 1366.700 468C1376 468.200 1385 468 1393.300 467.300C1400 466.500 1407 465.300 1413.300 464C1420 462.800 1427 461.800 1433.300 460C1436 458.800 1437.500 457.300 1438.700 456C1441 453.500 1443.500 451.800 1446.700 450.700C1451 449.300 1455.500 448.300 1460 447.300C1465 446.300 1470.500 445.800 1474.700 444C1476.500 442 1476.700 439 1476.700 436C1477 431.500 1476.700 427 1476 422.700C1475 417 1473.700 412 1472 406.700C1470.500 402 1468.800 397.500 1466.700 393.300C1465 389 1463 385 1460 381.300C1457.500 378.800 1455 377 1452 376"/>
<path d="M1232.700 394.700C1240 393.500 1252 391.500 1263.300 390.700C1264 392.500 1264.300 394 1264.700 396C1262 394.500 1259 392.500 1257 391.500"/>
<path d="M1232.700 395.300C1225 396.500 1219 397.700 1212.700 398.700C1207 399.700 1201.500 400.500 1196.700 401.300C1195.500 405 1194.500 408.500 1194 412C1194 414 1194.500 415.800 1195.300 417.300C1198 417 1200.500 416.800 1203.300 416.700C1208 417 1212.500 417.500 1216.700 418.700C1222 421 1226.500 423.800 1231.300 426C1235 427 1239 427.500 1243.300 427.300C1250 426.500 1256.500 425.300 1263.300 424C1269 423.300 1274.500 422.500 1279.300 421.300C1281 420.300 1282 419 1282 417.300C1281 415 1279.500 412.800 1278 410.700C1276 407.800 1273.700 405.300 1271.300 402.700C1269 400.300 1266.800 398 1264.700 396"/>
<path d="M1234 394.500L1244 393.200" stroke-width="4"/>
<path d="M1257.300 461.300C1257.500 459.300 1258 457.500 1259.300 456C1262.500 453 1266 450.500 1270 448C1274 445.500 1278.500 443 1283.300 441.300C1290 439.800 1296.500 439 1303.300 438.700C1313 438.500 1323 438 1333.300 438C1338 439.300 1342.500 441 1346.700 442.700C1351 444.300 1355.500 445.800 1360 447.300C1363 448.200 1366 449 1368.700 450"/>
<path d="M1405.300 386.700C1405.500 385.300 1406 384.300 1406.700 383.300C1411 383.500 1415.500 384 1420 385.300C1424.500 388 1428 392 1430.700 396.700"/>
<path d="M1413.300 382C1408 382 1400 382 1393.300 382.700C1388.500 384 1384 385.800 1380 388C1377.500 390.500 1376.300 393.700 1376 397.300C1375.800 402 1376.500 406.500 1378 410.700C1380 414.300 1383 417 1386.700 418.700C1392 420.300 1398 421.300 1404 422C1409.500 423.300 1414.500 424.800 1420 426C1424.500 426.700 1429 427 1433.300 426.700C1436.500 426 1439.300 424.800 1441.300 422.700C1442.800 420.300 1443.300 417.500 1443.300 414.700C1442.800 410.500 1441.500 406.500 1440 402.700C1439 399 1437.700 395.300 1436 392C1433.500 388.800 1430.300 386.500 1426.700 384.700C1422.500 383.300 1418 382.300 1413.300 382"/>
</g>
</svg>
<!--SCRIBBLE-END-->
</body></html>
